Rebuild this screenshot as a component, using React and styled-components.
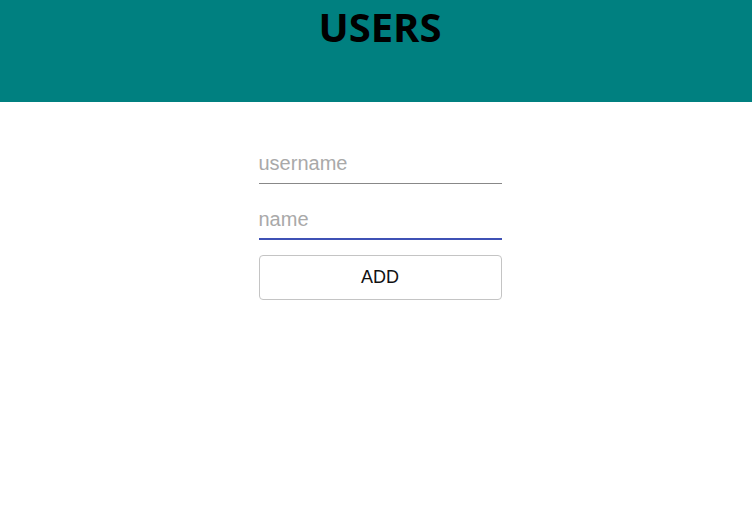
import styled, { createGlobalStyle } from "styled-components";

const GlobalStyle = createGlobalStyle`
  body {
    margin: 0;
    font-family: "Liberation Sans", Arial, sans-serif;
    background: #fff;
  }
`;

const Page = styled.div`
  padding-left: 8px;
`;

const Header = styled.header`
  height: 102px;
  margin-left: -8px;
  padding-left: 8px;
  background: #008080;
  display: flex;
  justify-content: center;
  align-items: flex-start;
`;

const Title = styled.h1`
  margin: 0;
  font-family: "Open Sans", sans-serif;
  font-weight: 700;
  font-size: 40px;
  line-height: 54px;
  color: #000;
`;

const Form = styled.form`
  width: 243px;
  margin: 46px auto 0;
  display: flex;
  flex-direction: column;
`;

const Field = styled.input`
  font-family: "Liberation Sans", Arial, sans-serif;
  font-size: 20px;
  border: none;
  border-bottom: ${({ focused }) => (focused ? "2px solid #3f51b5" : "1px solid #888")};
  height: 36px;
  box-sizing: border-box;
  padding: 0 0 4px;
  margin-bottom: 20px;
  outline: none;
  color: #222;
  background: transparent;
  &::placeholder {
    color: #a9a9a9;
  }
`;

const Button = styled.button`
  height: 45px;
  margin-top: -5px;
  border: 1px solid #c4c4c4;
  border-radius: 4px;
  background: #fff;
  font-family: "Liberation Sans", Arial, sans-serif;
  font-size: 18px;
  color: #111;
`;

export default function App() {
  return (
    <Page>
      <GlobalStyle />
      <Header>
        <Title>USERS</Title>
      </Header>
      <Form onSubmit={(e) => e.preventDefault()}>
        <Field placeholder="username" />
        <Field placeholder="name" focused autoFocus />
        <Button type="submit">ADD</Button>
      </Form>
    </Page>
  );
}
